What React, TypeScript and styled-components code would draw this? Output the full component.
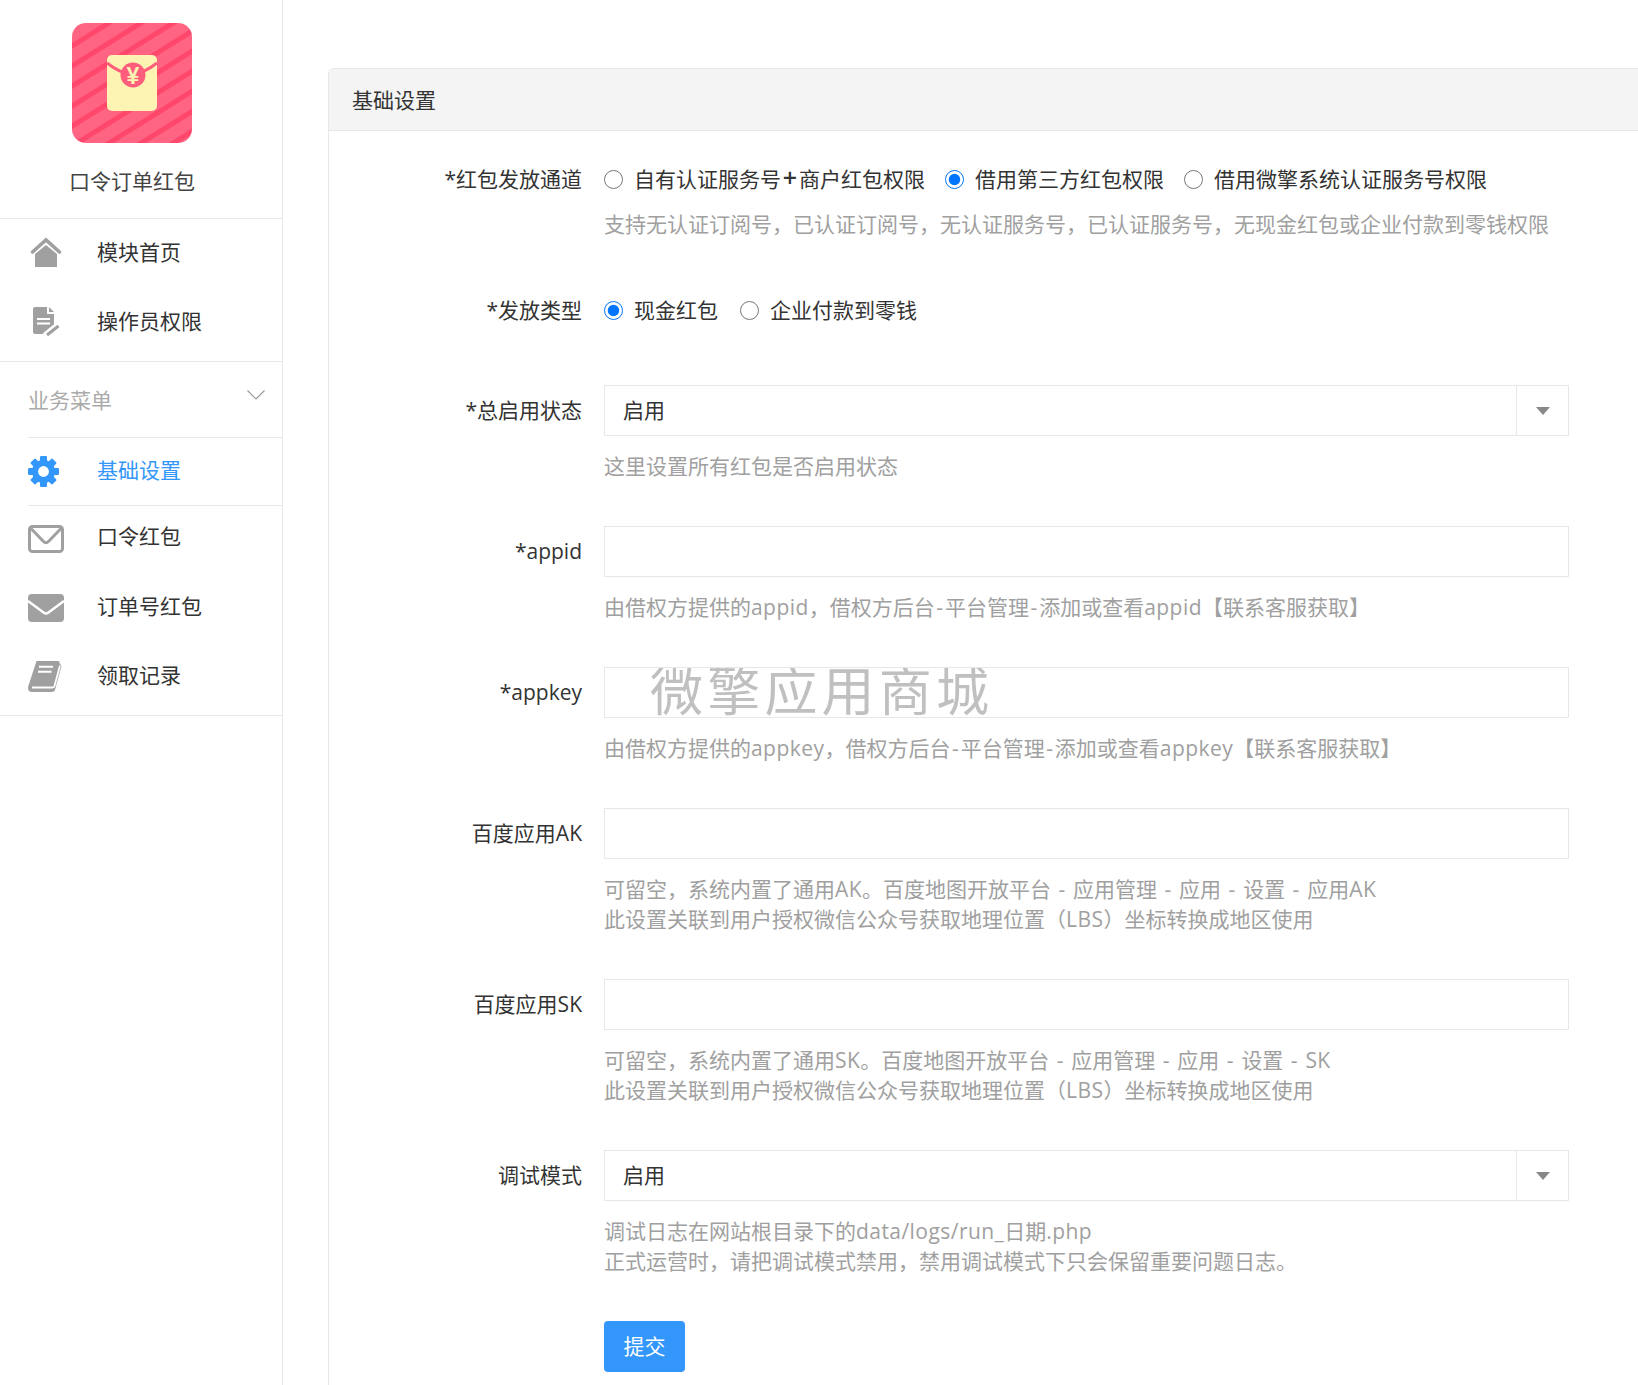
import styled, { createGlobalStyle } from 'styled-components';

const GRAY = '#a0a0a0';
const BLUE = '#3296fa';
const LINE = '#e7e7e7';

const GlobalStyle = createGlobalStyle`
  html, body {
    margin: 0;
    width: 1638px;
    height: 1385px;
    overflow: hidden;
    background: #fff;
  }
  body {
    font-family: "Open Sans", "Noto Sans CJK SC", sans-serif;
    font-size: 21px;
    line-height: 30px;
    color: #333;
  }
`;

const Page = styled.div`
  display: flex;
  width: 1638px;
  height: 1385px;
  overflow: hidden;
`;

const Sidebar = styled.aside`
  flex: 0 0 283px;
  box-sizing: border-box;
  border-right: 1px solid ${LINE};
`;

const Brand = styled.div`
  display: flex;
  flex-direction: column;
  align-items: center;
  padding: 23px 18px 22px 0;
  border-bottom: 1px solid ${LINE};
`;

const BrandTitle = styled.div`
  margin-top: 23px;
  color: #444;
`;

const Group = styled.nav<{ $top?: number; $gap?: number; $bottom?: number; $inset?: boolean }>`
  display: flex;
  flex-direction: column;
  gap: ${p => p.$gap ?? 7}px;
  margin-top: ${p => p.$top ?? 0}px;
  padding-bottom: ${p => p.$bottom ?? 9}px;
  margin-left: ${p => (p.$inset ? 28 : 0)}px;
  border-bottom: 1px solid ${LINE};
`;

const Item = styled.a<{ $active?: boolean; $flush?: boolean }>`
  display: flex;
  align-items: center;
  height: 62px;
  padding-left: ${p => (p.$flush ? 0 : 28)}px;
  color: ${p => (p.$active ? BLUE : '#333')};

  svg {
    flex: 0 0 36px;
    width: 36px;
    height: 36px;
    margin-right: 33px;
    overflow: visible;
  }
`;

const SectionHead = styled.div`
  display: flex;
  justify-content: space-between;
  align-items: flex-start;
  height: 52px;
  margin-left: 28px;
  padding: 23px 17px 0 0;
  color: #aaa;
  border-bottom: 1px solid ${LINE};

  svg {
    margin-top: 5px;
  }
`;

const Main = styled.main`
  flex: 1;
  min-width: 0;
  padding: 68px 0 0 45px;
  overflow: hidden;
`;

const Card = styled.section`
  box-sizing: border-box;
  width: 1400px;
  border: 1px solid ${LINE};
  border-radius: 6px 0 0 0;
`;

const CardHead = styled.header`
  box-sizing: border-box;
  height: 62px;
  padding: 16px 23px;
  background: #f4f4f4;
  border-bottom: 1px solid ${LINE};
`;

const CardBody = styled.form`
  padding-top: 33px;
`;

const Row = styled.div<{ $gap?: number }>`
  display: grid;
  grid-template-columns: 253px 965px;
  column-gap: 22px;
  margin-bottom: ${p => p.$gap ?? 45}px;
`;

const Label = styled.label<{ $tall?: boolean }>`
  text-align: right;
  color: #333;
  line-height: ${p => (p.$tall ? 51 : 30)}px;
`;

const Radios = styled.div<{ $gap: number }>`
  display: flex;
  gap: ${p => p.$gap}px;
`;

const RadioLabel = styled.label`
  display: flex;
  align-items: center;
  gap: 11px;
  color: #333;
`;

const RadioInput = styled.input`
  width: 19px;
  height: 19px;
  margin: 0;
`;

const Plus = styled.span`
  margin: 0 1.8px;
  font-size: 25px;
  font-weight: 600;
  line-height: 1;
`;

const Help = styled.p`
  margin: 15px 0 0;
  color: ${GRAY};
  white-space: nowrap;
`;

const Latin = styled.span`
  letter-spacing: 0.45px;
`;

const Dash = styled.span`
  margin: 0 1.5px;
`;

const Field = styled.div`
  position: relative;
  box-sizing: border-box;
  display: flex;
  height: 51px;
  border: 1px solid ${LINE};
  overflow: hidden;
`;

const TextInput = styled.input`
  flex: 1;
  min-width: 0;
  padding: 0 18px;
  border: 0;
  outline: 0;
  font: inherit;
  color: #333;
  background: transparent;
`;

const Watermark = styled.span`
  position: absolute;
  left: 45px;
  top: -3px;
  font-size: 53px;
  font-weight: 400;
  line-height: 51px;
  letter-spacing: 4.2px;
  color: #c0c0c0;
  white-space: nowrap;
  pointer-events: none;
`;

const SelectValue = styled.div`
  flex: 1;
  padding: 0 18px;
  line-height: 49px;
  color: #333;
`;

const SelectArrow = styled.div`
  flex: 0 0 51px;
  display: flex;
  align-items: center;
  justify-content: center;
  border-left: 1px solid ${LINE};

  &::after {
    content: '';
    border-top: 8px solid #888;
    border-left: 7.5px solid transparent;
    border-right: 7.5px solid transparent;
  }
`;

const Submit = styled.button`
  width: 81px;
  height: 51px;
  padding: 0 0 2px;
  border: 0;
  border-radius: 4px;
  background: ${BLUE};
  color: #fff;
  font: inherit;
`;

function LogoIcon() {
  return (
    <svg width="120" height="120" viewBox="0 0 120 120">
      <defs>
        <pattern id="stripes" width="12" height="17" patternUnits="userSpaceOnUse" patternTransform="rotate(-32)">
          <rect width="12" height="17" fill="#ff6482" />
          <rect width="12" height="5" fill="#ff476c" />
        </pattern>
      </defs>
      <rect width="120" height="120" rx="14" fill="url(#stripes)" />
      <rect x="35" y="32" width="50" height="56" rx="5" fill="#fdf3b2" />
      <path d="M35 40 Q48 50 60 52 Q72 50 85 40" fill="none" stroke="#ff5d7c" strokeWidth="3" />
      <circle cx="61" cy="52" r="12.5" fill="#ff5d7c" />
      <text x="61" y="60.5" textAnchor="middle" fontSize="23" fontWeight="700" fill="#fdf3b2" fontFamily="Liberation Sans, sans-serif">¥</text>
    </svg>
  );
}

function HomeIcon() {
  return (
    <svg viewBox="0 0 36 36">
      <polyline points="4.5,18 18,6 31.5,18" fill="none" stroke={GRAY} strokeWidth="3.6" strokeLinecap="round" />
      <path d="M7 20 L18 11 L29 20 V33 H7 Z" fill={GRAY} />
    </svg>
  );
}

function DocIcon() {
  return (
    <svg viewBox="0 0 36 36">
      <path d="M7 4 H19 V11 H26 V31 H7 Q5 31 5 29 V6 Q5 4 7 4 Z" fill={GRAY} />
      <path d="M21 4 L26 9 H21 Z" fill={GRAY} />
      <path d="M9 16 H22 M9 20.5 H22" stroke="#fff" strokeWidth="2" />
      <path d="M17 33 L32 21" stroke="#fff" strokeWidth="7" />
      <path d="M19 32 L30.5 23" stroke={GRAY} strokeWidth="3" />
    </svg>
  );
}

function GearIcon() {
  return (
    <svg viewBox="0 0 36 36">
      <circle cx="15.5" cy="19.5" r="11.5" fill={BLUE} />
      {[0, 45, 90, 135, 180, 225, 270, 315].map(a => (
        <rect key={a} x="12" y="4" width="7" height="6" rx="1.2" fill={BLUE} transform={`rotate(${a} 15.5 19.5)`} />
      ))}
      <circle cx="15.5" cy="19.5" r="5.4" fill="#fff" />
    </svg>
  );
}

function MailOutlineIcon() {
  return (
    <svg viewBox="0 0 36 36">
      <rect x="1.5" y="8.5" width="33" height="25" rx="3" fill="none" stroke={GRAY} strokeWidth="3" />
      <path d="M2.5 10 L15.5 23.5 Q18 26 20.5 23.5 L33.5 10" fill="none" stroke={GRAY} strokeWidth="3" />
    </svg>
  );
}

function MailFilledIcon() {
  return (
    <svg viewBox="0 0 36 36">
      <rect x="0" y="6" width="36" height="28" rx="4" fill={GRAY} />
      <path d="M0 13 L15.5 24.5 Q18 26.5 20.5 24.5 L36 13" fill="none" stroke="#fff" strokeWidth="2.4" />
    </svg>
  );
}

function BookIcon() {
  return (
    <svg viewBox="0 0 36 36">
      <path d="M8.5 4 H30 Q32 4 31.5 6 L33.5 9 L27 33 Q26.5 35 24 35 H4 Q0 35 0 31 Q0 29 1 27 Z" fill={GRAY} />
      <path d="M4 30.5 H24.5 Q26 30.5 26.5 29 L32 8.5" fill="none" stroke="#fff" strokeWidth="1.8" />
      <path d="M11 9.7 H25 M10 14.7 H23.5" stroke="#fff" strokeWidth="2" />
    </svg>
  );
}

function ChevronIcon() {
  return (
    <svg width="18" height="10" viewBox="0 0 18 10">
      <polyline points="0.5,0.5 9,9 17.5,0.5" fill="none" stroke="#999" strokeWidth="1.2" />
    </svg>
  );
}

// latin runs and hyphens sit a little wider in the original font
function helpLine(line: string) {
  return line.split(/([A-Za-z0-9_.\/ -]+)/).map((part, i) => {
    if (i % 2 === 0) return part;
    return (
      <Latin key={i}>
        {part.split('-').map((bit, j) => (
          <span key={j}>
            {j > 0 && <Dash>-</Dash>}
            {bit}
          </span>
        ))}
      </Latin>
    );
  });
}

type FieldRow = {
  label: string;
  select?: boolean;
  mark?: string;
  help: string[];
};

const FIELD_ROWS: FieldRow[] = [
  { label: '*总启用状态', select: true, help: ['这里设置所有红包是否启用状态'] },
  { label: '*appid', help: ['由借权方提供的appid，借权方后台-平台管理-添加或查看appid【联系客服获取】'] },
  { label: '*appkey', mark: '微擎应用商城', help: ['由借权方提供的appkey，借权方后台-平台管理-添加或查看appkey【联系客服获取】'] },
  {
    label: '百度应用AK',
    help: ['可留空，系统内置了通用AK。百度地图开放平台 - 应用管理 - 应用 - 设置 - 应用AK', '此设置关联到用户授权微信公众号获取地理位置（LBS）坐标转换成地区使用'],
  },
  {
    label: '百度应用SK',
    help: ['可留空，系统内置了通用SK。百度地图开放平台 - 应用管理 - 应用 - 设置 - SK', '此设置关联到用户授权微信公众号获取地理位置（LBS）坐标转换成地区使用'],
  },
  {
    label: '调试模式',
    select: true,
    help: ['调试日志在网站根目录下的data/logs/run_日期.php', '正式运营时，请把调试模式禁用，禁用调试模式下只会保留重要问题日志。'],
  },
];

export default function App() {
  return (
    <Page>
      <GlobalStyle />
      <Sidebar>
        <Brand>
          <LogoIcon />
          <BrandTitle>口令订单红包</BrandTitle>
        </Brand>
        <Group $top={2}>
          <Item><HomeIcon />模块首页</Item>
          <Item><DocIcon />操作员权限</Item>
        </Group>
        <SectionHead>
          业务菜单
          <ChevronIcon />
        </SectionHead>
        <Group $top={1} $bottom={4} $inset>
          <Item $active $flush><GearIcon />基础设置</Item>
        </Group>
        <Group $top={-1} $gap={7.5}>
          <Item><MailOutlineIcon />口令红包</Item>
          <Item><MailFilledIcon />订单号红包</Item>
          <Item><BookIcon />领取记录</Item>
        </Group>
      </Sidebar>
      <Main>
        <Card>
          <CardHead>基础设置</CardHead>
          <CardBody>
            <Row $gap={56}>
              <Label>*红包发放通道</Label>
              <div>
                <Radios $gap={20}>
                  <RadioLabel>
                    <RadioInput type="radio" name="channel" />
                    <span>自有认证服务号<Plus>+</Plus>商户红包权限</span>
                  </RadioLabel>
                  <RadioLabel><RadioInput type="radio" name="channel" defaultChecked />借用第三方红包权限</RadioLabel>
                  <RadioLabel><RadioInput type="radio" name="channel" />借用微擎系统认证服务号权限</RadioLabel>
                </Radios>
                <Help>支持无认证订阅号，已认证订阅号，无认证服务号，已认证服务号，无现金红包或企业付款到零钱权限</Help>
              </div>
            </Row>
            <Row $gap={60}>
              <Label>*发放类型</Label>
              <Radios $gap={22}>
                <RadioLabel><RadioInput type="radio" name="kind" defaultChecked />现金红包</RadioLabel>
                <RadioLabel><RadioInput type="radio" name="kind" />企业付款到零钱</RadioLabel>
              </Radios>
            </Row>
            {FIELD_ROWS.map(row => (
              <Row key={row.label}>
                <Label $tall>{row.label}</Label>
                <div>
                  <Field>
                    {row.select ? (
                      <>
                        <SelectValue>启用</SelectValue>
                        <SelectArrow />
                      </>
                    ) : (
                      <TextInput type="text" />
                    )}
                    {row.mark && <Watermark>{row.mark}</Watermark>}
                  </Field>
                  <Help>
                    {row.help.map((line, i) => (
                      <span key={line}>
                        {i > 0 && <br />}
                        {helpLine(line)}
                      </span>
                    ))}
                  </Help>
                </div>
              </Row>
            ))}
            <Row>
              <span />
              <div>
                <Submit type="button">提交</Submit>
              </div>
            </Row>
          </CardBody>
        </Card>
      </Main>
    </Page>
  );
}
